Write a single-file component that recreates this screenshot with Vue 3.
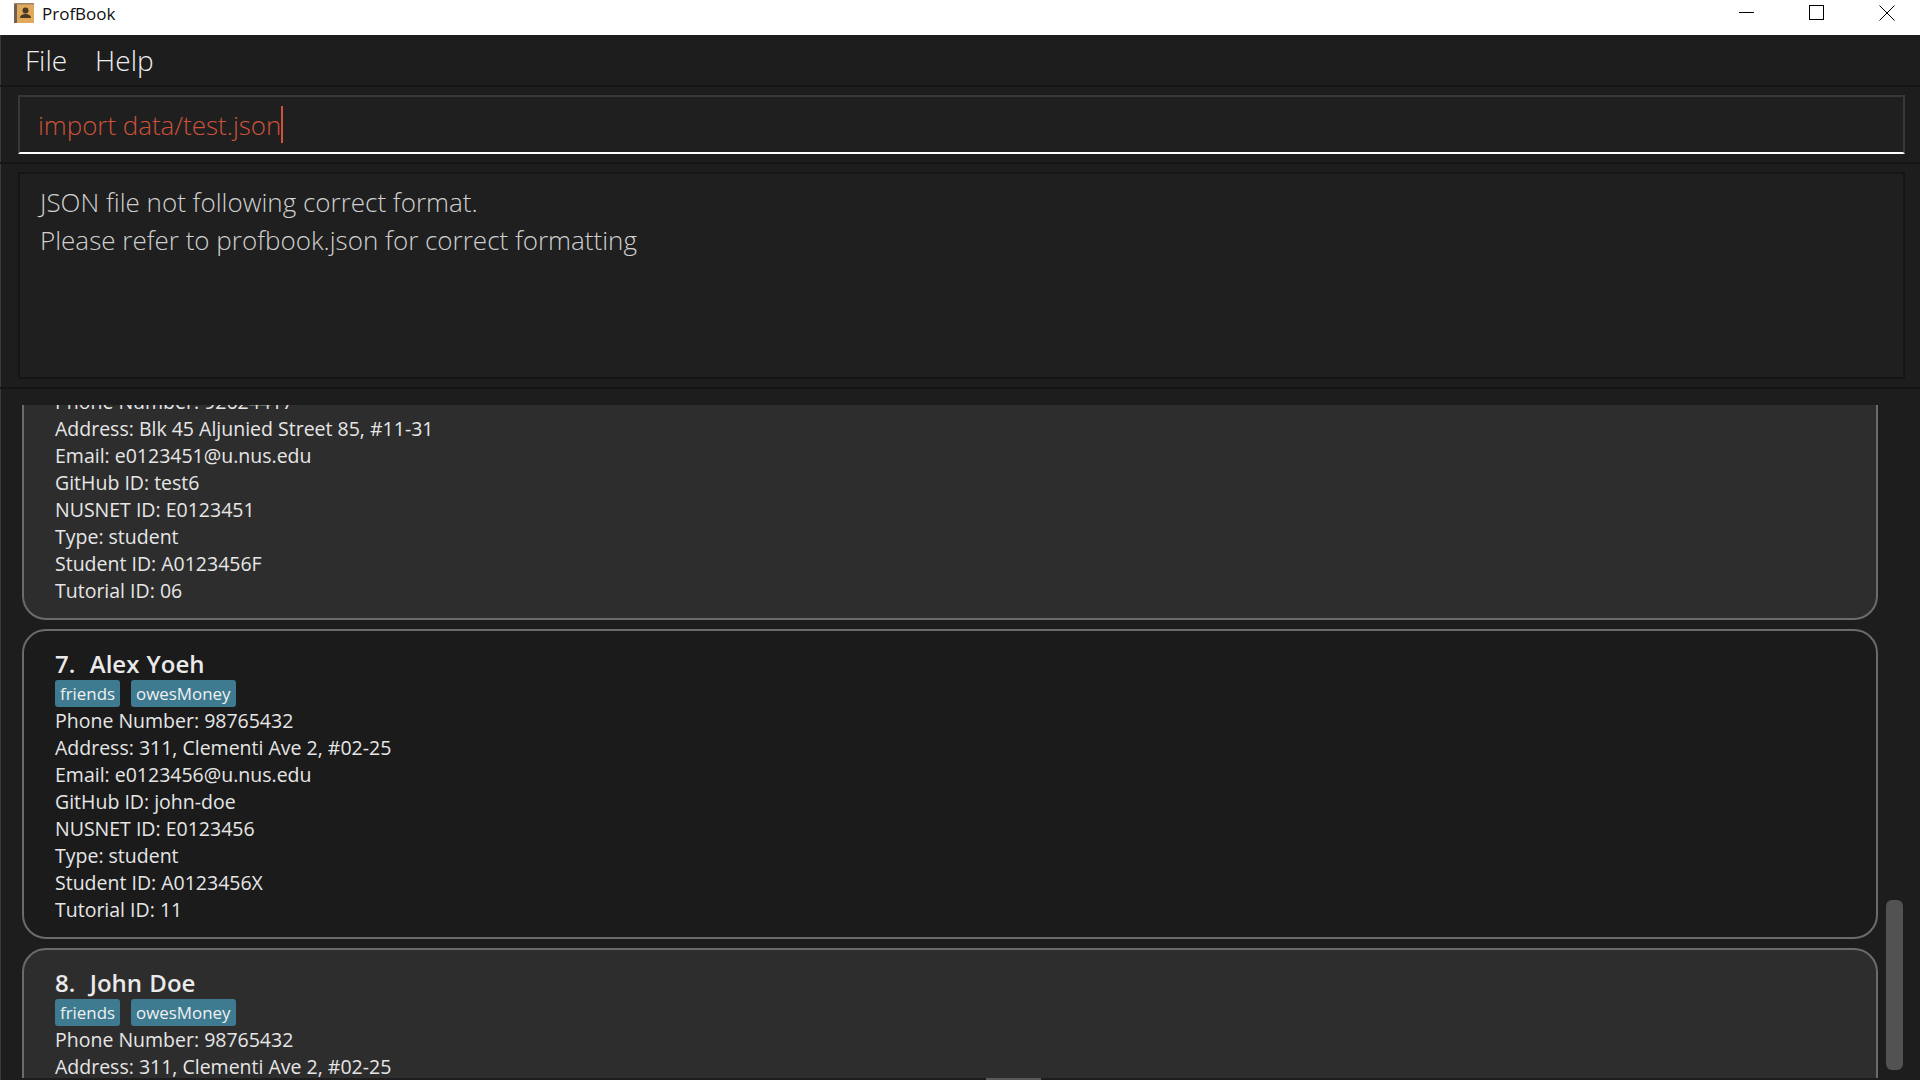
<script setup>
const people = [
  { cls: 'odd', clipped: true, lines: ['Phone Number: 92624417', 'Address: Blk 45 Aljunied Street 85, #11-31', 'Email: e0123451@u.nus.edu', 'GitHub ID: test6', 'NUSNET ID: E0123451', 'Type: student', 'Student ID: A0123456F', 'Tutorial ID: 06'] },
  { cls: 'even', name: '7.  Alex Yoeh', tags: ['friends', 'owesMoney'], lines: ['Phone Number: 98765432', 'Address: 311, Clementi Ave 2, #02-25', 'Email: e0123456@u.nus.edu', 'GitHub ID: john-doe', 'NUSNET ID: E0123456', 'Type: student', 'Student ID: A0123456X', 'Tutorial ID: 11'] },
  { cls: 'odd', name: '8.  John Doe', tags: ['friends', 'owesMoney'], lines: ['Phone Number: 98765432', 'Address: 311, Clementi Ave 2, #02-25', 'Email: e0123456@u.nus.edu', 'GitHub ID: john-doe'] }
]
</script>

<template>
  <div class="app">
    <header class="titlebar">
      <svg class="appicon" width="22" height="22" viewBox="0 0 22 22">
        <rect x="1" y="1" width="20" height="20" rx="1" fill="#e0a95c" />
        <rect x="1" y="1" width="3" height="20" fill="#6f6254" />
        <rect x="1" y="1" width="20" height="1.500" fill="#9a8468" />
        <circle cx="12.500" cy="8.500" r="3" fill="#4d3a22" />
        <path d="M7 16c0-3 3-4 5.500-4s5.500 1 5.500 4z" fill="#4d3a22" />
      </svg>
      <span class="apptitle">ProfBook</span>
      <div class="winbtns">
        <svg width="16" height="16" viewBox="0 0 16 16"><path d="M0 7.500h15" stroke="#000" fill="none" /></svg>
        <svg width="16" height="16" viewBox="0 0 16 16"><rect x="0.500" y="0.500" width="14" height="14" stroke="#000" fill="none" /></svg>
        <svg width="16" height="16" viewBox="0 0 16 16"><path d="M0.500 0.500l15 15M15.500 0.500l-15 15" stroke="#000" fill="none" /></svg>
      </div>
    </header>
    <nav class="menubar">
      <span>File</span>
      <span>Help</span>
    </nav>
    <section class="cmdpane">
      <div class="cmdbox">import data/test.json<i class="caret"></i></div>
    </section>
    <section class="resultpane">
      <div class="resultbox">
        <p>JSON file not following correct format.</p>
        <p>Please refer to profbook.json for correct formatting</p>
      </div>
    </section>
    <section class="listpane">
      <div class="list">
        <article v-for="(p, i) in people" :key="i" class="card" :class="[p.cls, { clipped: p.clipped }]">
          <h2 v-if="p.name">{{ p.name }}</h2>
          <div v-if="p.tags" class="tags"><span v-for="t in p.tags" :key="t">{{ t }}</span></div>
          <div v-for="l in p.lines" :key="l" class="line">{{ l }}</div>
        </article>
      </div>
      <div class="vthumb"></div>
      <div class="hthumb"></div>
    </section>
  </div>
</template>

<style scoped>
.app {
  width: 1920px;
  height: 1080px;
  display: flex;
  flex-direction: column;
  overflow: hidden;
  background: #1d1d1d;
  font-family: "Open Sans", sans-serif;
  box-shadow: inset 1px 0 0 #3a3a3a;
}
.titlebar {
  height: 35px;
  flex: none;
  background: #fff;
  display: flex;
  align-items: flex-start;
  padding-left: 13px;
  color: #111;
}
.appicon { margin-top: 2px; }
.apptitle {
  font-size: 17px;
  margin-left: 7px;
  line-height: 27px;
}
.winbtns {
  margin-left: auto;
  display: flex;
  gap: 54px;
  padding: 5px 25px 0 0;
}
.menubar {
  height: 52px;
  flex: none;
  box-sizing: border-box;
  display: flex;
  gap: 28px;
  padding: 6px 25px 0;
  font-size: 28px;
  font-weight: 300;
  line-height: 38px;
  color: #eee;
  border-bottom: 2px solid #151515;
}
.cmdpane {
  height: 77px;
  flex: none;
  box-sizing: border-box;
  padding: 8px 15px 0 18px;
  border-bottom: 2px solid #151515;
}
.cmdbox {
  height: 59px;
  box-sizing: border-box;
  border: 2px solid #383838;
  border-bottom: 2px solid #fff;
  background: #1f1f1f;
  display: flex;
  align-items: center;
  padding-left: 18px;
  font-size: 25.900px;
  font-weight: 300;
  color: #cf523b;
}
.caret {
  display: block;
  width: 2px;
  height: 37px;
  background: #cf523b;
}
.resultpane {
  height: 225px;
  flex: none;
  box-sizing: border-box;
  padding: 8px 15px 0 18px;
  border-bottom: 2px solid #151515;
}
.resultbox {
  height: 207px;
  box-sizing: border-box;
  border: 2px solid #151515;
  background: #1f1f1f;
  padding: 9px 0 0 20px;
  font-size: 26px;
  font-weight: 300;
  line-height: 38px;
  color: #d0d0d0;
}
.resultbox p { margin: 0; }
.listpane {
  flex: 1;
  position: relative;
  min-height: 0;
  padding-top: 16px;
}
.list {
  overflow: hidden;
  padding: 0 42px 0 22px;
  box-sizing: border-box;
  display: flex;
  flex-direction: column;
  gap: 9px;
  height: 673px;
}
.card {
  flex: none;
  box-sizing: border-box;
  border: 2px solid #6b6b6b;
  border-radius: 24px;
  padding: 17px 0 14px 31px;
  font-size: 19.500px;
  line-height: 27px;
  color: #e6e6e6;
}
.card.clipped {
  margin-top: -17px;
  border-top: 0;
  border-top-left-radius: 0;
  border-top-right-radius: 0;
  padding-top: 0;
}
.odd { background: #2d2d2d; }
.even { background: #1b1b1b; }
.card h2 {
  margin: 0;
  font-size: 24px;
  word-spacing: 1px;
  line-height: 32px;
  font-weight: 600;
  white-space: pre;
  color: #eaeaea;
}
.tags {
  display: flex;
  gap: 11px;
}
.tags span {
  height: 27px;
  box-sizing: border-box;
  padding: 0 5px;
  background: #3e7b91;
  border-radius: 3px;
  font-size: 16.900px;
  line-height: 27px;
  font-weight: 500;
  color: #f0f0f0;
}
.vthumb {
  position: absolute;
  left: 1886px;
  top: 511px;
  width: 17px;
  height: 170px;
  border-radius: 6px;
  background: #525252;
}
.hthumb {
  position: absolute;
  left: 986px;
  bottom: 0;
  width: 55px;
  height: 2px;
  background: #5a5a5a;
}
</style>
